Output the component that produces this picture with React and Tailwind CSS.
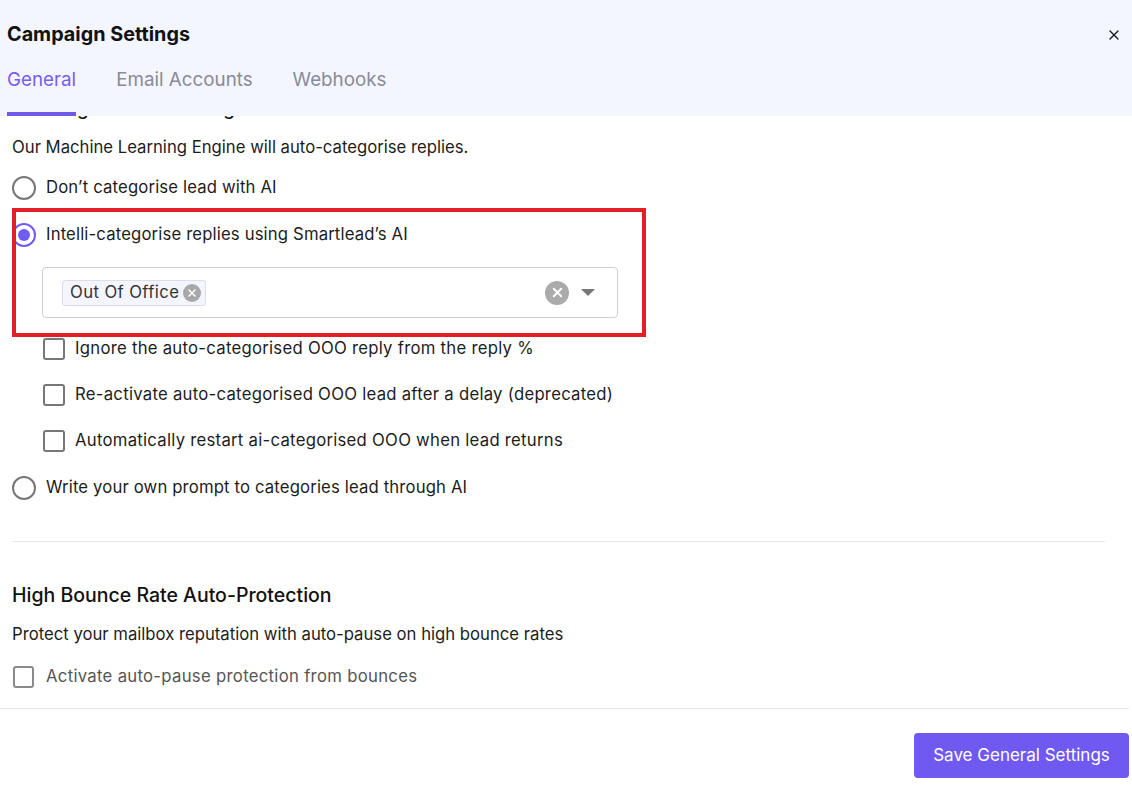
import { X } from "lucide-react";

const font = { fontFamily: "Inter, 'Noto Sans', sans-serif" };

function Radio({ checked, label }) {
  return (
    <label className="flex h-[47px] items-center gap-[10px]">
      <span
        className={`flex h-[24px] w-[24px] shrink-0 items-center justify-center rounded-full border-2 ${
          checked ? "border-[#6f5cf1]" : "border-[#777]"
        }`}
      >
        {checked && <span className="h-[12px] w-[12px] rounded-full bg-[#6f5cf1]" />}
      </span>
      <span className="text-[16.7px] tracking-[0.15px] text-[#1c1c1c]">{label}</span>
    </label>
  );
}

function Checkbox({ label }) {
  return (
    <label className="flex h-[46px] items-center gap-[10px]">
      <span className="h-[22px] w-[22px] shrink-0 rounded-[3px] border-2 border-[#777]" />
      <span className="text-[16.7px] tracking-[0.27px] text-[#1c1c1c]">{label}</span>
    </label>
  );
}

export default function App() {
  return (
    <div style={font} className="flex h-[800px] w-[1132px] flex-col overflow-hidden bg-white">
      <div className="relative z-10 h-[116px] shrink-0 bg-[#f3f6fe] px-[7px]">
        <div className="flex items-center justify-between pt-[22px]">
          <h2 className="text-[19.8px] font-bold leading-[25px] text-[#111]">Campaign Settings</h2>
          <button className="mr-[3px] text-[#1c1c2c]" aria-label="Close">
            <X size={16} strokeWidth={2} />
          </button>
        </div>
        <div className="mt-[22px] flex gap-[40px] text-[18.8px]">
          <div className="flex h-[47px] flex-col justify-between">
            <span className="leading-[22px] text-[#7a5cf3]">General</span>
            <span className="h-[4px] w-full bg-[#6e5ae6]" />
          </div>
          <span className="leading-[22px] text-[#8a8a99]">Email Accounts</span>
          <span className="leading-[22px] text-[#8a8a99]">Webhooks</span>
        </div>
      </div>

      <div className="flex w-[1129px] flex-1 flex-col">
        <div className="flex-1 overflow-hidden px-[12px]">
          <h3 className="-mt-[18px] text-[18.8px] font-medium leading-[22px] text-[#111]">
            AI Categorisation Settings
          </h3>
          <p className="mt-[16px] text-[16.7px] leading-[22px] text-[#1c1c1c]">
            Our Machine Learning Engine will auto-categorise replies.
          </p>
          <div className="relative mt-[6px]">
            <Radio label="Don’t categorise lead with AI" />
            <Radio checked label="Intelli-categorise replies using Smartlead’s AI" />
            <div className="ml-[30px] mt-[9px] flex h-[51px] w-[576px] items-center rounded-[4px] border border-[#cfcfcf] pl-[19px] pr-[22px]">
              <span className="flex h-[26px] items-center gap-[4px] rounded-[3px] border border-[#dcdcf0] bg-[#f4f5ff] pl-[7px] pr-[4px] text-[16.7px] tracking-[0.4px] text-[#333]">
                Out Of Office
                <span className="flex h-[18px] w-[18px] items-center justify-center rounded-full bg-[#a8a8a8]">
                  <X size={12} strokeWidth={3} className="text-white" />
                </span>
              </span>
              <span className="ml-auto flex h-[24px] w-[24px] items-center justify-center rounded-full bg-[#ababab]">
                <X size={15} strokeWidth={3} className="text-white" />
              </span>
              <svg width="14" height="8" viewBox="0 0 14 8" className="ml-[12px]">
                <path d="M0 0 L14 0 L7 7 Z" fill="#777" />
              </svg>
            </div>
            <div className="ml-[31px] mt-[8px]">
              <Checkbox label="Ignore the auto-categorised OOO reply from the reply %" />
              <Checkbox label="Re-activate auto-categorised OOO lead after a delay (deprecated)" />
              <Checkbox label="Automatically restart ai-categorised OOO when lead returns" />
            </div>
            <Radio label="Write your own prompt to categories lead through AI" />
            <div className="pointer-events-none absolute left-0 top-[44px] h-[129px] w-[634px] border-[4px] border-[#e31e24]" />
          </div>

          <div className="mr-[12px] mt-[30px] h-px bg-[#e6e6ef]" />

          <h3 className="mt-[41px] text-[19.5px] font-medium leading-[24px] text-[#111]">
            High Bounce Rate Auto-Protection
          </h3>
          <p className="mt-[16px] text-[16.7px] leading-[22px] text-[#1c1c1c]">
            Protect your mailbox reputation with auto-pause on high bounce rates
          </p>
          <label className="mt-[19px] flex items-center gap-[12px] pl-px">
            <span className="h-[22px] w-[21px] shrink-0 rounded-[3px] border-2 border-[#8a8a8a]" />
            <span className="text-[16.7px] tracking-[0.3px] text-[#555]">Activate auto-pause protection from bounces</span>
          </label>
        </div>

        <div className="flex h-[92px] shrink-0 items-center justify-end border-t border-[#e6e6ef] pt-[2px]">
          <button className="h-[45px] w-[215px] rounded-[4px] bg-[#7059f0] text-[17px] text-white">
            Save General Settings
          </button>
        </div>
      </div>
    </div>
  );
}
